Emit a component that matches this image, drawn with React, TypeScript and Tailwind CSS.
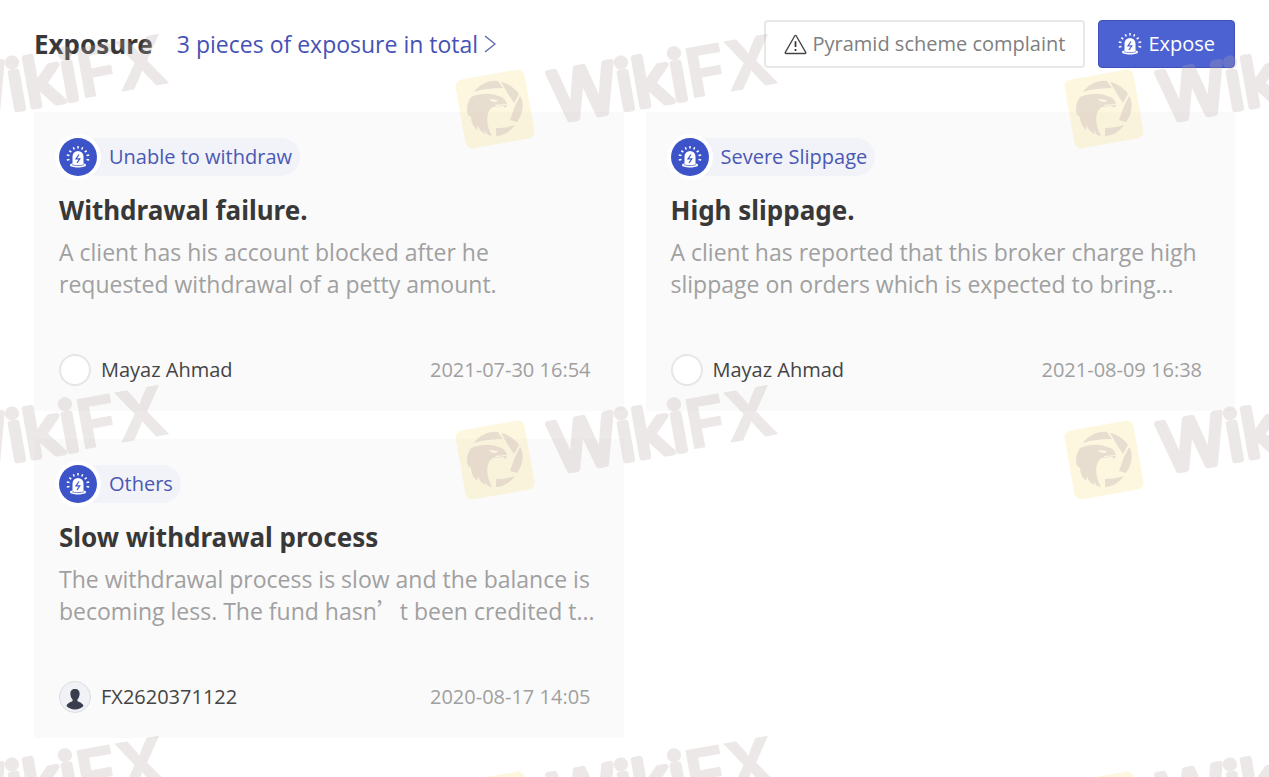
interface Exposure {
  id: number;
  type: string;
  title: string;
  content: string;
  author: string;
  hasAvatar: boolean;
  date: string;
}

const exposures: Exposure[] = [
  {
    id: 1,
    type: 'Unable to withdraw',
    title: 'Withdrawal failure.',
    content: 'A client has his account blocked after he requested withdrawal of a petty amount.',
    author: 'Mayaz Ahmad',
    hasAvatar: false,
    date: '2021-07-30 16:54',
  },
  {
    id: 2,
    type: 'Severe Slippage',
    title: 'High slippage.',
    content:
      'A client has reported that this broker charge high slippage on orders which is expected to bring...',
    author: 'Mayaz Ahmad',
    hasAvatar: false,
    date: '2021-08-09 16:38',
  },
  {
    id: 3,
    type: 'Others',
    title: 'Slow withdrawal process',
    content:
      'The withdrawal process is slow and the balance is becoming less. The fund hasn’t been credited t...',
    author: 'FX2620371122',
    hasAvatar: true,
    date: '2020-08-17 14:05',
  },
];

const watermarkTiles = [-179, 430, 1039].flatMap((x) => [20, 371, 722].map((y) => ({ x, y })));

function SirenIcon({ className, bolt }: { className: string; bolt: string }) {
  return (
    <svg viewBox="0 0 24 24" className={className} aria-hidden="true">
      <path
        d="M6.500 18.500V11.500a5.500 5.500 0 0 1 11 0v7c1.600.1 2.500.8 2.500 1.800 0 1.300-3.200 2.200-8 2.200s-8-.9-8-2.200c0-1 .9-1.700 2.500-1.800z"
        fill="currentColor"
      />
      <path d="M6 19.600c2 1.300 10 1.300 12 0" fill="none" stroke={bolt} strokeWidth="0.700" />
      <path d="M13 9.500 10 13.800h3.800L11 18" fill="none" stroke={bolt} strokeWidth="1.200" />
      <path
        d="M12 1v2.600M7.300 2.300l1 2.200M16.700 2.300l-1 2.200M3.300 5.600l2 1.500M20.700 5.600l-2 1.500M.8 10l2.700.6M23.200 10l-2.700.6M.8 15l2.700-.4M23.200 15l-2.700-.4"
        fill="none"
        stroke="currentColor"
        strokeWidth="1.500"
      />
    </svg>
  );
}

function WarningIcon() {
  return (
    <svg viewBox="0 0 24 22" className="h-[21px] w-[23px]" aria-hidden="true">
      <path
        d="M11.300 1.800a.8.8 0 0 1 1.400 0l10 17.400a.8.8 0 0 1-.7 1.200H2a.8.8 0 0 1-.7-1.200z"
        fill="none"
        stroke="#444"
        strokeWidth="1.400"
      />
      <path d="M12 7.500v6M12 15.700v2" stroke="#333" strokeWidth="1.800" />
    </svg>
  );
}

function Avatar({ filled }: { filled: boolean }) {
  if (!filled) {
    return <span className="size-8 rounded-full border-2 border-[#e6e6e6] bg-white" />;
  }

  return (
    <span className="size-8 overflow-hidden rounded-full border border-[#dcdde2] bg-[#f1f2f5] p-px">
      <svg viewBox="0 0 28 28" className="size-full" aria-hidden="true">
        <path
          d="M14 6c-3 0-4.800 2-4.600 5 .1 2.300 1 4.300 2.200 5.500v1.600c-.8 1-5.400 1.500-6.100 5 2.200 2.200 5 3.400 8.500 3.400s6.300-1.200 8.500-3.400c-.7-3.500-5.300-4-6.100-5v-1.600c1.200-1.200 2.100-3.200 2.200-5.500.2-3-1.600-5-4.600-5z"
          fill="#3a3d4e"
        />
      </svg>
    </span>
  );
}

function ExposureCard({ item }: { item: Exposure }) {
  // the apostrophe is set full width
  const [head, ...rest] = item.content.split('’');

  return (
    <article className="bg-[#fafafa] px-[25px] pt-[26px] pb-[25px]">
      <div className="flex h-[38px] items-center">
        <span className="z-10 flex size-[38px] shrink-0 items-center justify-center rounded-full bg-[#3d54c8] text-white ring-4 ring-white">
          <SirenIcon className="size-6" bolt="#3d54c8" />
        </span>
        <span className="-ml-1 flex h-[38px] items-center rounded-r-full bg-[#f1f3f9] pr-2 pl-4 text-xl text-[#4a58b4]">
          {item.type}
        </span>
      </div>
      <h2 className="mt-4 font-['Noto_Sans',sans-serif] text-[26px] leading-9 font-bold text-[#383838]">
        {item.title}
      </h2>
      <p className="mt-2 min-h-16 text-[23px] leading-8 text-[#a0a0a0]">
        {head}
        {rest.map((part) => (
          <span key={part}>
            <span className="font-['Noto_Sans_CJK_SC',sans-serif] leading-none">’</span>
            {part}
          </span>
        ))}
      </p>
      <div className="mt-[54px] flex h-8 items-center text-xl">
        <Avatar filled={item.hasAvatar} />
        <span className="ml-2.5 text-[#444]">{item.author}</span>
        <time className="mr-2 ml-auto text-[#a0a0a0]">{item.date}</time>
      </div>
    </article>
  );
}

function Watermark() {
  return (
    <svg
      className="pointer-events-none absolute inset-0 z-20 size-full overflow-hidden"
      aria-hidden="true"
    >
      {watermarkTiles.map(({ x, y }) => (
        <g key={`${x}-${y}`} transform={`translate(${x} ${y})`}>
          <g transform="translate(65 89)">
            <rect
              x="-35"
              y="-35"
              width="70"
              height="70"
              rx="7"
              fill="#fbe6a0"
              opacity="0.320"
              transform="rotate(-10)"
            />
            <g fill="#c4b3b4" opacity="0.360">
              <path d="M-21-17C-16-24-7-29 3-28L8-21C-2-21-12-20-21-17z" />
              <path d="M6-27C13-26 21-20 24-15L19-6 13-15z" />
              <path d="M25-13C29-8 29 4 22 13L15 11 20-3z" />
              <path d="M20 16C15 23 8 27 1 27L1 19C7 19 14 18 20 16z" />
              <path d="M-24-12C-14-16-3-16 3-13 9-12 12-8 12-3L10-1 8-3-2-2C-9 2-10 14-3 27L-7 26-11 20-9 25C-14 23-16 20-17 16L-18 21C-22 17-24 13-24 8L-27 6C-29 0-28-6-24-12z" />
              <path d="M-6-10 3-9 1-7-4-8z" fill="#fff" />
              <path d="M0-4 12-5 11-4 1-3z" fill="#fff" />
            </g>
          </g>
          <text
            transform="translate(125 102) rotate(-10)"
            className="font-['Inter',sans-serif] text-[68px]"
            fill="#b9aaa6"
            stroke="#b9aaa6"
            strokeLinejoin="round"
            opacity="0.260"
          >
            <tspan className="font-normal" strokeWidth="6">
              Wiki
            </tspan>
            <tspan className="font-bold" strokeWidth="1">
              FX
            </tspan>
          </text>
        </g>
      ))}
    </svg>
  );
}

export default function App() {
  return (
    <main className="relative min-h-screen overflow-hidden bg-white px-[34px] pt-5 pb-[38px] font-['Open_Sans',sans-serif]">
      <header className="flex flex-wrap items-center gap-y-4">
        <h1 className="font-['Noto_Sans',sans-serif] text-[26px] leading-9 font-bold text-[#383838]">
          Exposure
        </h1>
        <a href="#exposures" className="ml-6 flex items-center gap-1.5 text-[23px] text-[#4552b5]">
          3 pieces of exposure in total
          <svg viewBox="0 0 12 18" className="h-[18px] w-3" aria-hidden="true">
            <path d="M1 1l10 8-10 8" fill="none" stroke="#5a64a8" strokeWidth="1.300" />
          </svg>
        </a>
        <div className="ml-auto flex gap-[13px]">
          <button
            type="button"
            className="flex h-12 items-center gap-1.5 rounded-sm border-2 border-[#e8e8e8] bg-white px-[18px] text-xl text-[#808080]"
          >
            <WarningIcon />
            Pyramid scheme complaint
          </button>
          <button
            type="button"
            className="flex h-12 items-center gap-1.5 rounded-sm border border-[#3f4fb8] bg-[#4c62d2] px-[19px] text-xl text-white"
          >
            <SirenIcon className="size-6" bolt="#4c62d2" />
            Expose
          </button>
        </div>
      </header>

      <section id="exposures" className="mt-11 grid grid-cols-2 gap-x-[22px] gap-y-7">
        {exposures.map((item) => (
          <ExposureCard key={item.id} item={item} />
        ))}
      </section>

      <Watermark />
    </main>
  );
}
